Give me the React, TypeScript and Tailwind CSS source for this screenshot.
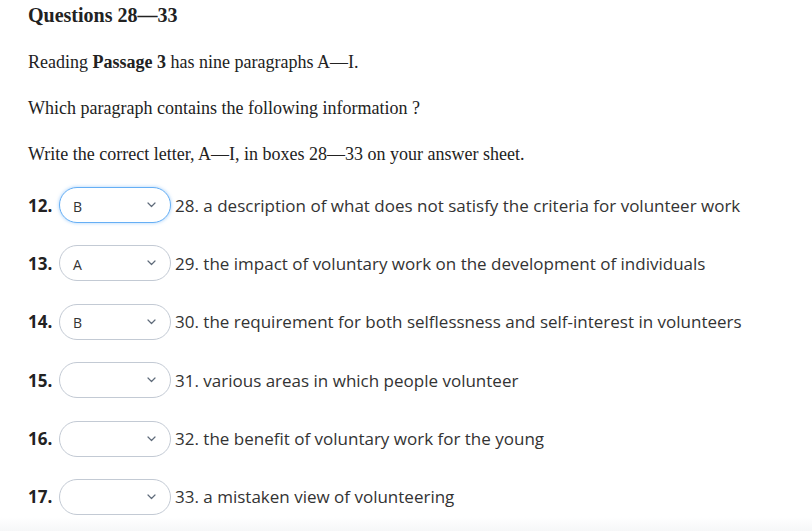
import { useState } from "react"

interface Row {
  no: number
  value: string
  text: string
}

const rows: Row[] = [
  { no: 12, value: "B", text: "28. a description of what does not satisfy the criteria for volunteer work" },
  { no: 13, value: "A", text: "29. the impact of voluntary work on the development of individuals" },
  { no: 14, value: "B", text: "30. the requirement for both selflessness and self-interest in volunteers" },
  { no: 15, value: "", text: "31. various areas in which people volunteer" },
  { no: 16, value: "", text: "32. the benefit of voluntary work for the young" },
  { no: 17, value: "", text: "33. a mistaken view of volunteering" },
]

const letters = ["", "A", "B", "C", "D", "E", "F", "G", "H", "I"]

function Chevron() {
  return (
    <svg width="9" height="6" viewBox="0 0 9 6" className="shrink-0">
      <path d="M1 1l3.5 3.5L8 1" fill="none" stroke="#5f6b7a" strokeWidth="1.2" strokeLinecap="round" strokeLinejoin="round" />
    </svg>
  )
}

export default function App() {
  const [answers, setAnswers] = useState(rows.map((r) => r.value))

  return (
    <div className="relative w-[812px] h-[531px] overflow-hidden bg-white">
      <div className="absolute left-0 right-0 bottom-0 h-[14px] bg-gradient-to-b from-white to-[#f6f7f8]" />

      <div className="relative">
        <div className="pl-[28px] pt-[5px] text-[#222] font-['Liberation_Serif',serif] text-[18px]">
          <h3 className="font-bold text-[20px] leading-[20px]">Questions 28—33</h3>
          <p className="mt-[27px] leading-[20px]">
            Reading <b>Passage 3</b> has nine paragraphs A—I.
          </p>
          <p className="mt-[26px] leading-[20px]">Which paragraph contains the following information ?</p>
          <p className="mt-[26px] leading-[20px]">Write the correct letter, A—I, in boxes 28—33 on your answer sheet.</p>
        </div>

        {/* ── Answer rows ── */}
        <div className="pl-[28px] mt-[23px] flex flex-col gap-[22.4px] font-['Open_Sans',sans-serif]">
          {rows.map((r, i) => (
            <div key={r.no} className="flex items-center h-[36px]">
              <span className="w-[31px] font-bold text-[17px] text-[#222] leading-none">{r.no}.</span>
              <label
                className={`relative flex items-center justify-between w-[112px] h-[36px] rounded-[18px] border bg-white pl-[13px] pr-[14px] ${
                  i === 0
                    ? "border-[#66aff5] shadow-[0_0_3px_1px_rgba(102,175,245,0.35)]"
                    : "border-[#c3cad4]"
                }`}
              >
                <span className="text-[14px] text-[#333] leading-none pt-[3px]">{answers[i]}</span>
                <Chevron />
                <select
                  value={answers[i]}
                  onChange={(e) => {
                    const next = [...answers]
                    next[i] = e.target.value
                    setAnswers(next)
                  }}
                  className="absolute inset-0 opacity-0 cursor-pointer"
                >
                  {letters.map((l) => (
                    <option key={l} value={l}>{l}</option>
                  ))}
                </select>
              </label>
              <span className="ml-[4px] text-[17px] text-[#333] leading-none">{r.text}</span>
            </div>
          ))}
        </div>
      </div>
    </div>
  )
}
